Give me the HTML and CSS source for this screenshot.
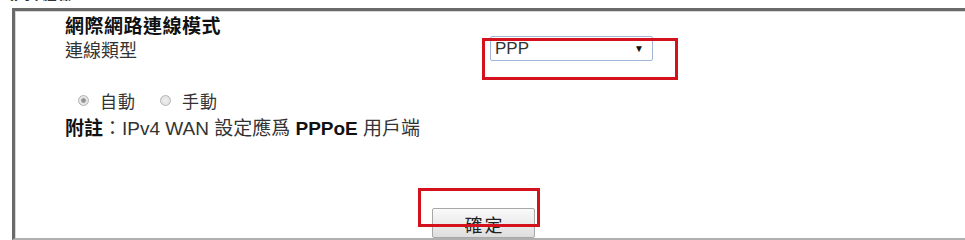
FILE: index.html
```html
<!DOCTYPE html>
<html lang="zh-Hant">
<head>
<meta charset="utf-8">
<title>網際網路連線模式</title>
<link rel="stylesheet" href="styles.css">
</head>
<body>
<div class="cut-head">IPv4 模式</div>
<div class="panel">
  <div class="title">網際網路連線模式</div>
  <div class="row">
    <div class="label">連線類型</div>
    <div class="select-wrap">
      <div class="select"><span class="sel-text">PPP</span><span class="arrow">▼</span></div>
      <div class="hl hl-select"></div>
    </div>
  </div>
  <div class="radios">
    <span class="radio checked"></span><span class="rlabel">自動</span>
    <span class="radio"></span><span class="rlabel">手動</span>
  </div>
  <div class="note"><b>附註</b>：IPv4 WAN 設定應爲 <b>PPPoE</b> 用戶端</div>
  <div class="btn-row">
    <div class="btn-wrap">
      <button class="btn" type="button">確定</button>
      <div class="hl hl-btn"></div>
    </div>
  </div>
</div>
</body>
</html>
```
FILE: styles.css
```css
html, body {
  margin: 0;
  padding: 0;
  background: #ffffff;
  overflow: hidden;
}
body {
  width: 965px;
  height: 240px;
  font-family: "Liberation Sans", "Noto Sans CJK TC", sans-serif;
  color: #222;
}
.cut-head {
  height: 8px;
  margin-left: 10px;
  font-size: 14px;
  font-weight: bold;
  line-height: 8px;
  overflow: hidden;
  color: #333;
  position: relative;
  top: -7px;
}
.panel {
  margin-left: 12px;
  width: 945px;
  height: 227px;
  border-top: 3px solid #6a6a6a;
  border-left: 3px solid #6a6a6a;
  border-right: 3px solid #8a8a8a;
  border-bottom: 2px solid #b0b0b0;
  box-shadow: inset 1px 1px 0 #d8d8d8;
  padding-left: 50px;
  box-sizing: content-box;
  overflow: hidden;
}
.title {
  margin-top: 4px;
  font-size: 19px;
  line-height: 24px;
  font-weight: bold;
  color: #111;
  letter-spacing: 0.5px;
}
.row {
  display: grid;
  grid-template-columns: 425px auto;
  align-items: start;
}
.label {
  font-size: 18px;
  line-height: 22px;
  margin-top: 1px;
  color: #333;
}
.select-wrap {
  position: relative;
  width: 163px;
  height: 25px;
  margin-top: -3px;
}
.select {
  box-sizing: border-box;
  width: 163px;
  height: 25px;
  border: 1px solid #9fb6d6;
  border-radius: 2px;
  background: #fff;
  display: flex;
  align-items: center;
  justify-content: space-between;
  padding: 0 8px 0 4px;
}
.sel-text {
  font-size: 17px;
  color: #333;
}
.arrow {
  font-size: 10px;
  color: #111;
}
.hl {
  position: absolute;
  border: 3px solid #d3121d;
  box-sizing: border-box;
}
.hl-select {
  left: -8px;
  top: 2px;
  width: 196px;
  height: 42px;
}
.radios {
  margin-top: 28px;
  display: flex;
  align-items: center;
  height: 20px;
  padding-left: 13px;
}
.radio {
  width: 11px;
  height: 11px;
  border-radius: 50%;
  box-sizing: border-box;
  border: 1px solid #b5b5b5;
  background: radial-gradient(circle, #f0f0f0 0, #dcdcdc 100%);
  margin-right: 11px;
}
.radio.checked {
  background: radial-gradient(circle, #8a8a8a 0, #9a9a9a 30%, #e6e6e6 45%, #e0e0e0 100%);
}
.rlabel {
  font-size: 17px;
  color: #333;
  margin-right: 24px;
  letter-spacing: 1px;
}
.note {
  margin-top: 8px;
  font-size: 19px;
  line-height: 22px;
  color: #333;
}
.note b {
  color: #111;
}
.btn-row {
  padding-left: 353px;
  margin-top: 48px;
}
.btn-wrap {
  position: relative;
  width: 122px;
  height: 40px;
}
.btn {
  position: relative;
  margin-left: 14px;
  margin-top: 20px;
  width: 103px;
  height: 30px;
  border: 1px solid #a8a8a8;
  border-radius: 2px;
  background: linear-gradient(#fafafa, #dedede);
  font-family: "Liberation Sans", "Noto Sans CJK TC", sans-serif;
  font-size: 18px;
  color: #222;
  padding: 5px 0 0 2px;
  line-height: 24px;
  letter-spacing: 2px;
  vertical-align: top;
}
.hl-btn {
  left: 0;
  top: 0;
  width: 122px;
  height: 39px;
}
```
